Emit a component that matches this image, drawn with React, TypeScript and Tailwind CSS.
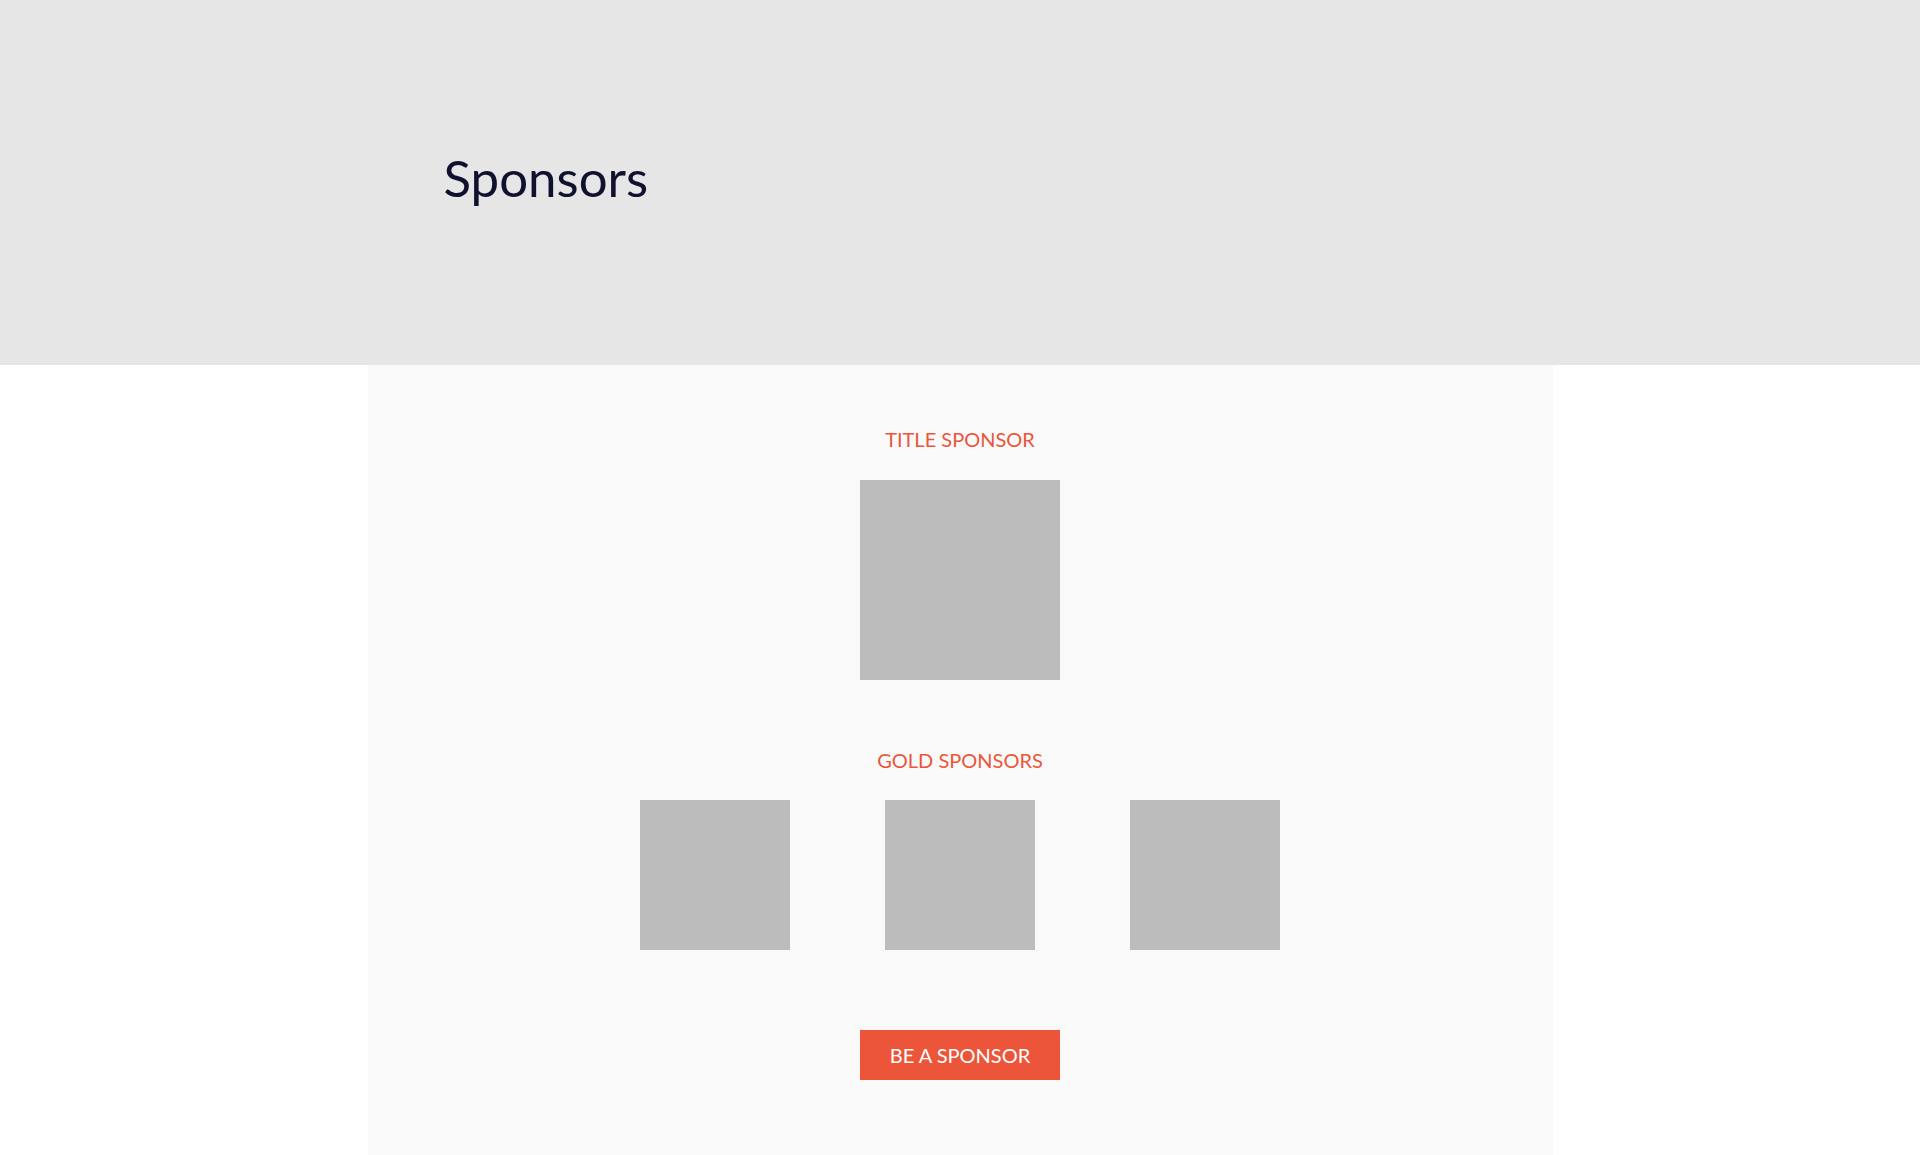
import React from 'react';

const font = { fontFamily: 'Lato, "Open Sans", sans-serif' };

function Label({ children }: { children: React.ReactNode }) {
  return (
    <h3 className="text-[20px] leading-[24px] text-[#ec5539] uppercase text-center">
      {children}
    </h3>
  );
}

function LogoBox({ size }: { size: 'lg' | 'md' }) {
  return (
    <div
      className={
        size === 'lg'
          ? 'w-[200px] h-[200px] bg-[#bcbcbc]'
          : 'w-[150px] h-[150px] bg-[#bcbcbc]'
      }
    />
  );
}

export default function App() {
  return (
    <div className="min-h-screen bg-white" style={font}>
      <header className="h-[365px] bg-[#e6e6e6]">
        <div className="w-[1185px] mx-auto pl-[76px] pt-[146px]">
          <h1 className="text-[51px] leading-[64px] text-[#10112e]">Sponsors</h1>
        </div>
      </header>

      <section className="w-[1185px] mx-auto bg-[#f9f9f9] pt-[62px] pb-[80px] flex flex-col items-center">
        <Label>Title Sponsor</Label>
        <div className="mt-[29px]">
          <LogoBox size="lg" />
        </div>

        <div className="mt-[68px]">
          <Label>Gold Sponsors</Label>
        </div>
        <div className="mt-[28px] flex gap-[95px]">
          <LogoBox size="md" />
          <LogoBox size="md" />
          <LogoBox size="md" />
        </div>

        <button className="mt-[80px] w-[200px] h-[50px] bg-[#ec5539] text-white text-[20px] uppercase">
          Be a Sponsor
        </button>
      </section>
    </div>
  );
}
